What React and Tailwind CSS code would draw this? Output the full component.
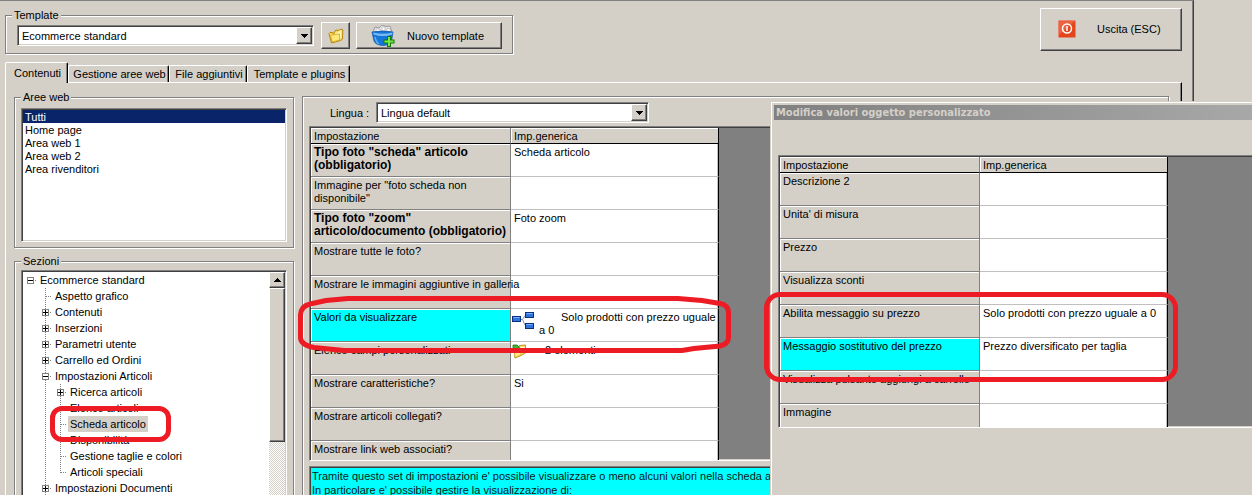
const AREAS = ['Tutti', 'Home page', 'Area web 1', 'Area web 2', 'Area rivenditori'];

// guides: one entry per indent cell, left to right
const SECTIONS = [
  { label: 'Ecommerce standard', guides: ['minus-root'] },
  { label: 'Aspetto grafico', guides: ['none', 'tee'] },
  { label: 'Contenuti', guides: ['none', 'plus'] },
  { label: 'Inserzioni', guides: ['none', 'plus'] },
  { label: 'Parametri utente', guides: ['none', 'plus'] },
  { label: 'Carrello ed Ordini', guides: ['none', 'plus'] },
  { label: 'Impostazioni Articoli', guides: ['none', 'minus'] },
  { label: 'Ricerca articoli', guides: ['none', 'line', 'plus'] },
  { label: 'Elenco articoli', guides: ['none', 'line', 'tee'] },
  { label: 'Scheda articolo', guides: ['none', 'line', 'tee'], selected: true },
  { label: 'Disponibilità', guides: ['none', 'line', 'tee'] },
  { label: 'Gestione taglie e colori', guides: ['none', 'line', 'tee'] },
  { label: 'Articoli speciali', guides: ['none', 'line', 'end'] },
  { label: 'Impostazioni Documenti', guides: ['none', 'plus'] },
];

const SETTINGS = [
  { name: 'Tipo foto "scheda" articolo (obbligatorio)', value: 'Scheda articolo', bold: true },
  { name: 'Immagine per "foto scheda non disponibile"' },
  { name: 'Tipo foto "zoom" articolo/documento (obbligatorio)', value: 'Foto zoom', bold: true },
  { name: 'Mostrare tutte le foto?' },
  { name: 'Mostrare le immagini aggiuntive in galleria', nowrap: true },
  { name: 'Valori da visualizzare', value: 'Solo prodotti con prezzo uguale a 0', icon: 'nodes', active: true },
  { name: 'Elenco campi personalizzati', value: '2 elementi', icon: 'list' },
  { name: 'Mostrare caratteristiche?', value: 'Si' },
  { name: 'Mostrare articoli collegati?' },
  { name: 'Mostrare link web associati?' },
];

const OBJECT_VALUES = [
  { name: 'Descrizione 2' },
  { name: "Unita' di misura" },
  { name: 'Prezzo' },
  { name: 'Visualizza sconti' },
  { name: 'Abilita messaggio su prezzo', value: 'Solo prodotti con prezzo uguale a 0' },
  { name: 'Messaggio sostitutivo del prezzo', value: 'Prezzo diversificato per taglia', active: true },
  { name: 'Visualizza pulsante aggiungi a carrello' },
  { name: 'Immagine' },
];

const SUNKEN =
  'border border-[#808080] border-r-white border-b-white p-px shadow-[inset_1px_1px_0_#404040,inset_-1px_-1px_0_#d4d0c8]';
const RAISED =
  'border border-white border-r-[#404040] border-b-[#404040] bg-[#d4d0c8] shadow-[inset_-1px_-1px_0_#808080]';
const ETCHED = 'border border-[#808080] shadow-[inset_1px_1px_0_#fff,1px_1px_0_#fff]';

function FolderIcon() {
  return (
    <svg width="16" height="16" viewBox="0 0 16 16" aria-hidden="true">
      <path d="M1 5.500 2 4.500h2.500L5.500 6 7 3l1-1 2 .5L14 1l.8 1-.3 9-2 1.500L3.500 15z" fill="#f6d75c" stroke="#b8860b" strokeWidth="1" />
      <path d="M7 5l3-.5L10.500 3l3-.8V10L8 12z" fill="#fdf3b0" />
      <path d="M2.500 8 4 7l7.500-1V12L4.500 14z" fill="#ffe97a" stroke="#d19c10" strokeWidth=".7" />
    </svg>
  );
}

function BasketIcon() {
  return (
    <svg width="24" height="22" viewBox="0 0 24 22" aria-hidden="true">
      <path d="M2 7 4 2l4 1 3-3 4 1.500L19 1l2 6z" fill="#e9e9ea" stroke="#8c8c90" strokeWidth=".8" />
      <path d="M5 4h4v3H5zM11 2h3v4h-3zM16 3l3 1v3h-3z" fill="#fff" stroke="#a9a9ad" strokeWidth=".6" />
      <path d="M1 7q11-2 21 0l-1.500 9q-1 4-8.500 4.500Q4.500 20 3 16z" fill="#1676d8" stroke="#0c4fa8" strokeWidth=".7" />
      <path d="M2 7.500q10 2.500 19.500 0l-.3 2q-9 3-18.500 0z" fill="#79bdf5" />
      <path d="M4 12q1 5 4 7" fill="none" stroke="#5fb0f2" strokeWidth="1.500" />
      <path d="M16 11h4v3.500h3.500v4H20V22h-4v-3.500h-3.500v-4H16z" fill="#0c7a0c" />
      <path d="M17 12h2v3.500h3.500v2H19V21h-2v-3.500h-3.500v-2H17z" fill="#7be84a" />
    </svg>
  );
}

function PowerIcon() {
  return (
    <svg width="18" height="18" viewBox="0 0 18 18" aria-hidden="true">
      <rect x=".5" y=".5" width="17" height="17" rx="1" fill="#e2441c" stroke="#e9836c" />
      <path d="M1 1h16L1 15z" fill="#ee6f50" opacity=".7" />
      <circle cx="9" cy="8.500" r="4.500" fill="none" stroke="#fff" strokeWidth="1.500" />
      <path d="M9 6v5" stroke="#fff" strokeWidth="1.500" />
    </svg>
  );
}

function NodesIcon() {
  return (
    <svg className="shrink-0" width="23" height="19" viewBox="0 0 23 19" aria-hidden="true">
      <path d="M9 8.500h1.500L13 4.500M10.500 8.500 13 14" fill="none" stroke="#7a8fb5" />
      <g fill="#2f73dd" stroke="#0b2f80">
        <rect x=".5" y="5.500" width="8" height="5" />
        <rect x="13.500" y="1.500" width="8" height="5" />
        <rect x="13.500" y="12.500" width="8" height="5" />
      </g>
      <path d="M1.500 6.500h6M14.500 2.500h6M14.500 13.500h6" stroke="#7db0ff" />
    </svg>
  );
}

function ListIcon() {
  return (
    <svg className="shrink-0" width="15" height="15" viewBox="0 0 15 15" aria-hidden="true">
      <path d="M2.500 5.500 7 4l.5-2.500 6-.5v8L10 11l-7 3z" fill="#f7df72" stroke="#b8860b" strokeWidth=".9" />
      <path d="M8.500 3h4v5l-4 1z" fill="#fffbe0" />
      <path d="M2.500 8 9 6.500V11l-6 2.500z" fill="#ffec8a" stroke="#d19c10" strokeWidth=".6" />
      <path d="M1 1h4l2 2v2L4 6 1 5z" fill="#3fb52c" stroke="#1d7a12" strokeWidth=".8" />
    </svg>
  );
}

function Arrow({ up }) {
  return (
    <svg width="7" height="4" viewBox="0 0 7 4" shapeRendering="crispEdges" aria-hidden="true">
      <path d={up ? 'M3 0h1v1h1v1h1v1h1v1H0V3h1V2h1V1h1z' : 'M0 0h7v1H6v1H5v1H4v1H3V3H2V2H1V1H0z'} fill="#000" />
    </svg>
  );
}

function Combo({ id, label, value, className }) {
  return (
    <div className={`relative h-[21px] bg-white ${SUNKEN} ${className}`}>
      <select id={id} aria-label={label} className="block h-full w-full appearance-none bg-white pt-[2px] pr-5 pl-[3px] outline-none">
        <option>{value}</option>
      </select>
      <span className={`pointer-events-none absolute inset-y-px right-px flex w-4 items-center justify-center ${RAISED}`}>
        <Arrow />
      </span>
    </div>
  );
}

function Group({ title, className = '', children }) {
  return (
    <fieldset className={`px-[6px] ${ETCHED} ${className}`}>
      <legend className="bg-[#d4d0c8] px-[2px] leading-[14px]">{title}</legend>
      {children}
    </fieldset>
  );
}

function Tab({ active, className, children }) {
  return (
    <button
      type="button"
      role="tab"
      aria-selected={!!active}
      className={`rounded-t-[2px] border-t border-r border-l border-t-white border-r-black border-l-white bg-[#d4d0c8] pt-px pl-[2px] text-center whitespace-nowrap shadow-[inset_-1px_0_0_#808080] ${
        active ? '-mb-px h-[21px]' : 'h-[17px]'
      } ${className}`}
    >
      {children}
    </button>
  );
}

function Guide({ kind }) {
  const hasBox = kind.startsWith('plus') || kind.startsWith('minus');
  return (
    <svg className="shrink-0" width="15" height="16" viewBox="0 0 15 16" shapeRendering="crispEdges" aria-hidden="true">
      {['line', 'tee', 'plus', 'minus'].includes(kind) && (
        <path d="M7.5 0v16" stroke="#808080" strokeDasharray="1 1" />
      )}
      {kind === 'end' && <path d="M7.5 0v9" stroke="#808080" strokeDasharray="1 1" />}
      {kind !== 'line' && kind !== 'none' && <path d="M8 8.500h6" stroke="#808080" strokeDasharray="1 1" />}
      {hasBox && <rect x="4.500" y="5.500" width="6" height="6" fill="#fff" stroke="#808080" />}
      {hasBox && <path d="M5 8.500h5" stroke="#000" />}
      {kind.startsWith('plus') && <path d="M7.500 6v5" stroke="#000" />}
    </svg>
  );
}

function SectionTree() {
  return (
    <div className={`flex h-[300px] bg-white ${SUNKEN}`}>
      <ul role="tree" className="min-w-0 flex-1">
        {SECTIONS.map((s) => (
          <li key={s.label} role="treeitem" aria-selected={!!s.selected} className="flex h-4">
            {s.guides.map((kind, i) => (
              <Guide key={i} kind={kind} />
            ))}
            <span className={`px-[2px] leading-4 whitespace-nowrap ${s.selected ? 'bg-[#d4d0c8]' : ''}`}>{s.label}</span>
          </li>
        ))}
      </ul>
      <div className="flex w-4 flex-col bg-[repeating-conic-gradient(#d4d0c8_0_25%,#fff_0_50%)] bg-[length:2px_2px]">
        <button type="button" aria-label="Scorri su" className={`flex h-4 items-center justify-center ${RAISED}`}>
          <Arrow up />
        </button>
        <div className={`h-[154px] ${RAISED}`} />
      </div>
    </div>
  );
}

function SettingValue({ row }) {
  if (row.icon === 'nodes') {
    return (
      <div className="flex gap-1">
        <NodesIcon />
        <p className="indent-[22px]">{row.value}</p>
      </div>
    );
  }
  if (row.icon === 'list') {
    return (
      <div className="flex gap-[18px]">
        <ListIcon />
        <p>{row.value}</p>
      </div>
    );
  }
  return row.value;
}

function SettingsTable({ rows, labelWidth, valueWidth, className }) {
  return (
    <div className={`overflow-hidden bg-[#808080] ${SUNKEN} ${className}`}>
      <table className="border-separate border-spacing-0 text-left">
        <colgroup>
          <col className={labelWidth} />
          <col className={valueWidth} />
        </colgroup>
        <thead>
          <tr>
            {['Impostazione', 'Imp.generica'].map((title) => (
              <th
                key={title}
                scope="col"
                className="h-4 border-r border-b border-r-[#808080] border-b-black bg-[#d4d0c8] pt-px pl-[3px] font-normal shadow-[inset_1px_1px_0_#fff] last:border-r-black"
              >
                {title}
              </th>
            ))}
          </tr>
        </thead>
        <tbody>
          {rows.map((row) => (
            <tr key={row.name}>
              <th
                scope="row"
                className={`h-[33px] border-r border-b border-[#808080] pt-[2px] pl-[3px] align-top shadow-[inset_1px_1px_0_#fff] ${
                  row.bold ? 'text-[12px] leading-[13px] font-bold' : 'font-normal'
                } ${row.active ? 'bg-[#00ffff]' : 'bg-[#d4d0c8]'} ${row.nowrap ? 'max-w-0 whitespace-nowrap' : ''}`}
              >
                {row.name}
              </th>
              <td
                className={`h-[33px] border-r border-b border-r-black border-b-[#c0c0c0] bg-white pt-[2px] align-top shadow-[inset_-1px_0_0_#c0c0c0] ${
                  row.icon ? 'pl-px' : 'pl-[3px]'
                }`}
              >
                <SettingValue row={row} />
              </td>
            </tr>
          ))}
        </tbody>
      </table>
    </div>
  );
}

function ObjectDialog() {
  return (
    <section
      role="dialog"
      aria-labelledby="dialog-title"
      className="absolute top-[101px] -right-1 bottom-0 left-[770px] overflow-hidden border-t border-l border-[#d4d0c8] bg-[#d4d0c8] pt-[3px] pl-[3px] shadow-[inset_1px_1px_0_#fff]"
    >
      <h2
        id="dialog-title"
        className="h-[15px] bg-linear-to-r from-[#808080] to-[#a8a8a8] pl-[2px] font-['DejaVu_Sans_Condensed','DejaVu_Sans',sans-serif] text-[11px] leading-4 font-bold text-[#d4d0c8]"
      >
        Modifica valori oggetto personalizzato
      </h2>
      <div className="pt-[35px] pl-1">
        <SettingsTable rows={OBJECT_VALUES} labelWidth="w-[200px]" valueWidth="w-[188px]" className="h-[273px]" />
      </div>
    </section>
  );
}

export default function App() {
  return (
    <div className="relative h-screen overflow-hidden bg-[#d4d0c8] pr-[58px] font-['Liberation_Sans',Arial,sans-serif] text-[11px] leading-[13px] text-black">
      <main className="border-t border-r border-t-[#808080] border-r-[#404040] pr-[11px] pl-[5px] shadow-[inset_-1px_0_0_#808080]">
        <div className="flex items-start justify-between pt-[7px]">
          <Group title="Template" className="pb-1">
            <div className="flex items-center pr-1 pl-[5px]">
              <Combo id="template" label="Template" value="Ecommerce standard" className="w-[297px]" />
              <button type="button" aria-label="Apri" className={`ml-[7px] flex h-[27px] w-[29px] items-center justify-center ${RAISED}`}>
                <FolderIcon />
              </button>
              <button type="button" className={`ml-[6px] flex h-[27px] w-[146px] items-center gap-3 pt-px pl-[14px] ${RAISED}`}>
                <BasketIcon />
                Nuovo template
              </button>
            </div>
          </Group>
          <button type="button" className={`flex h-[43px] w-[142px] items-center gap-[21px] pr-[3px] pb-px pl-[17px] ${RAISED}`}>
            <PowerIcon />
            Uscita (ESC)
          </button>
        </div>

        <div role="tablist" className="mt-2 flex h-5 items-end">
          <Tab active className="w-[63px]">Contenuti</Tab>
          <Tab className="w-[101px]">Gestione aree web</Tab>
          <Tab className="w-[78px]">File aggiuntivi</Tab>
          <Tab className="w-[103px]">Template e plugins</Tab>
        </div>

        <div className="flex gap-2 border-t border-r border-l border-t-white border-r-black border-l-white pt-[7px] pr-3 pl-2 shadow-[inset_-1px_0_0_#808080]">
          <div className="w-[280px] shrink-0">
            <Group title="Aree web" className="pt-1 pb-[5px]">
              <ul role="listbox" aria-label="Aree web" className={`h-[134px] bg-white ${SUNKEN}`}>
                {AREAS.map((area, i) => (
                  <li
                    key={area}
                    role="option"
                    aria-selected={i === 0}
                    className={`h-[13px] pl-[2px] leading-[15px] ${i === 0 ? 'bg-[#0a246a] text-white' : ''}`}
                  >
                    {area}
                  </li>
                ))}
              </ul>
            </Group>
            <Group title="Sezioni" className="mt-[6px] pt-[2px] pb-[6px]">
              <SectionTree />
            </Group>
          </div>

          <div className={`mt-[6px] min-w-0 flex-1 px-[6px] pt-[5px] ${ETCHED}`}>
            <div className="flex items-center pl-[21px]">
              <label htmlFor="language" className="w-[46px] pt-px">Lingua :</label>
              <Combo id="language" value="Lingua default" className="w-[273px]" />
            </div>
            <SettingsTable rows={SETTINGS} labelWidth="w-[200px]" valueWidth="w-[208px]" className="mt-[3px] h-[335px]" />
            <div className={`mt-[5px] h-[80px] overflow-hidden bg-[#00ffff] ${SUNKEN}`}>
              <div className="pt-px pl-px leading-[14px] whitespace-nowrap text-[#102020]">
                <p>Tramite questo set di impostazioni e' possibile visualizzare o meno alcuni valori nella scheda articolo.</p>
                <p>In particolare e' possibile gestire la visualizzazione di:</p>
              </div>
            </div>
          </div>
        </div>
      </main>

      <ObjectDialog />

      {/* red marker strokes drawn over the windows */}
      <div className="pointer-events-none absolute top-[406px] left-[50px] h-[36px] w-[121px] rounded-[12px] border-[5px] border-[#ed1c24]" />
      <svg
        className="pointer-events-none absolute top-[294px] left-[296px]"
        width="440"
        height="62"
        viewBox="0 0 440 62"
        fill="none"
        aria-hidden="true"
      >
        <path
          d="M52 4.500H382L406 6.500 424 9.500Q432 11 432.500 18V44Q432 50 424 52L398 54.500 386 56.500H48L18 53.500Q5 51 4.500 44V21Q5 12 14 10L30 6.500z"
          stroke="#ed1c24"
          strokeWidth="5"
        />
      </svg>
      <div className="pointer-events-none absolute top-[292px] left-[764px] h-[90px] w-[414px] rounded-[16px] border-[5px] border-[#ed1c24]" />
    </div>
  );
}
